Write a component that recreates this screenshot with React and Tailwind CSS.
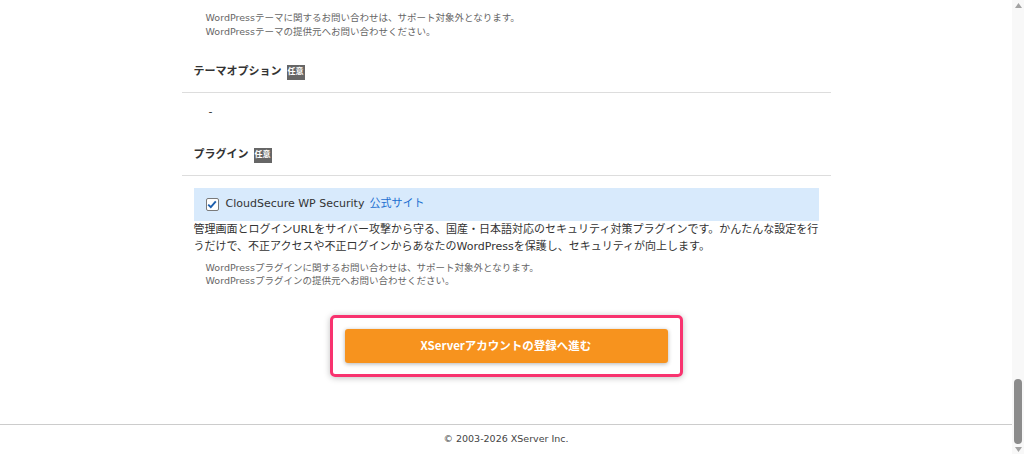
import React from 'react';

const Badge = () => (
  <span className="ml-[5px] inline-flex h-[15px] w-[18px] items-center justify-center bg-[#666] text-[8px] font-bold leading-none text-white">
    任意
  </span>
);

const App = () => {
  return (
    <div className="flex h-[454px] w-[1024px] overflow-hidden bg-white text-[#333] font-['DejaVu_Sans','Noto_Sans_CJK_JP',sans-serif]">
      <div className="flex flex-1 flex-col">
        <div className="mx-auto w-[649px]">
          <div className="pt-[11px] pl-6 text-[9.5px] leading-[14px] text-[#666]">
            <p>WordPressテーマに関するお問い合わせは、サポート対象外となります。</p>
            <p>WordPressテーマの提供元へお問い合わせください。</p>
          </div>

          <div className="mt-[25px] flex h-[16px] items-center px-3 text-[11px] font-bold">
            テーマオプション
            <Badge />
          </div>
          <div className="mt-[12px] border-b border-[#ddd]"></div>

          <div className="pt-[11px] pl-[27px] text-[11px] leading-[16px]">-</div>

          <div className="mt-[27px] flex h-[16px] items-center px-3 text-[11px] font-bold">
            プラグイン
            <Badge />
          </div>
          <div className="mt-[12px] border-b border-[#ddd]"></div>

          <div className="mx-3 mt-[12px] flex h-[33px] items-center bg-[#d8eafc] pl-3 text-[11px]">
            <span className="mr-[7px] flex h-[13px] w-[13px] items-center justify-center rounded-[2px] border border-[#7a7a7a] bg-white">
              <svg width="10" height="9" viewBox="0 0 10 9">
                <path d="M1.2 4.6 L3.8 7.2 L8.8 1.4" fill="none" stroke="#1d5fae" strokeWidth="1.9" />
              </svg>
            </span>
            <span>CloudSecure WP Security</span>
            <span className="ml-[5px] text-[#1c6fd1]">公式サイト</span>
          </div>

          <p className="px-3 whitespace-nowrap text-[11px] leading-[17px]">
            管理画面とログインURLをサイバー攻撃から守る、国産・日本語対応のセキュリティ対策プラグインです。かんたんな設定を行
            <br />
            うだけで、不正アクセスや不正ログインからあなたのWordPressを保護し、セキュリティが向上します。
          </p>

          <div className="mt-[6px] pl-6 text-[9.5px] leading-[13px] text-[#666]">
            <p>WordPressプラグインに関するお問い合わせは、サポート対象外となります。</p>
            <p>WordPressプラグインの提供元へお問い合わせください。</p>
          </div>

          <div className="mt-[28px] flex justify-center">
            <div className="rounded-[5px] border-[3px] border-[#f8336f] px-[12px] py-[11px] shadow-[0_1px_6px_rgba(0,0,0,0.25)]">
              <button className="flex h-[34px] w-[323px] items-center justify-center rounded-[3px] bg-[#f7931e] text-[11.5px] font-bold text-white shadow-[0_1px_4px_rgba(0,0,0,0.3)] font-['Noto_Sans_CJK_JP',sans-serif]">
                XServerアカウントの登録へ進む
              </button>
            </div>
          </div>
        </div>

        <div className="flex-1"></div>

        <footer className="flex h-[30px] items-center justify-center border-t border-[#ccc] text-[9.5px] text-[#444]">
          © 2003-2026 XServer Inc.
        </footer>
      </div>

      <div className="flex w-[12px] flex-col items-center bg-[#f8f8f8]">
        <svg className="mt-[3px]" width="7" height="5" viewBox="0 0 7 5">
          <path d="M3.5 0 L7 5 L0 5 Z" fill="#a3a3a3" />
        </svg>
        <div className="flex-1"></div>
        <div className="h-[65px] w-[8px] rounded-full bg-[#8c8c8c]"></div>
        <svg className="mt-[3px] mb-[2px]" width="7" height="5" viewBox="0 0 7 5">
          <path d="M0 0 L7 0 L3.5 5 Z" fill="#a3a3a3" />
        </svg>
      </div>
    </div>
  );
};

export default App;
